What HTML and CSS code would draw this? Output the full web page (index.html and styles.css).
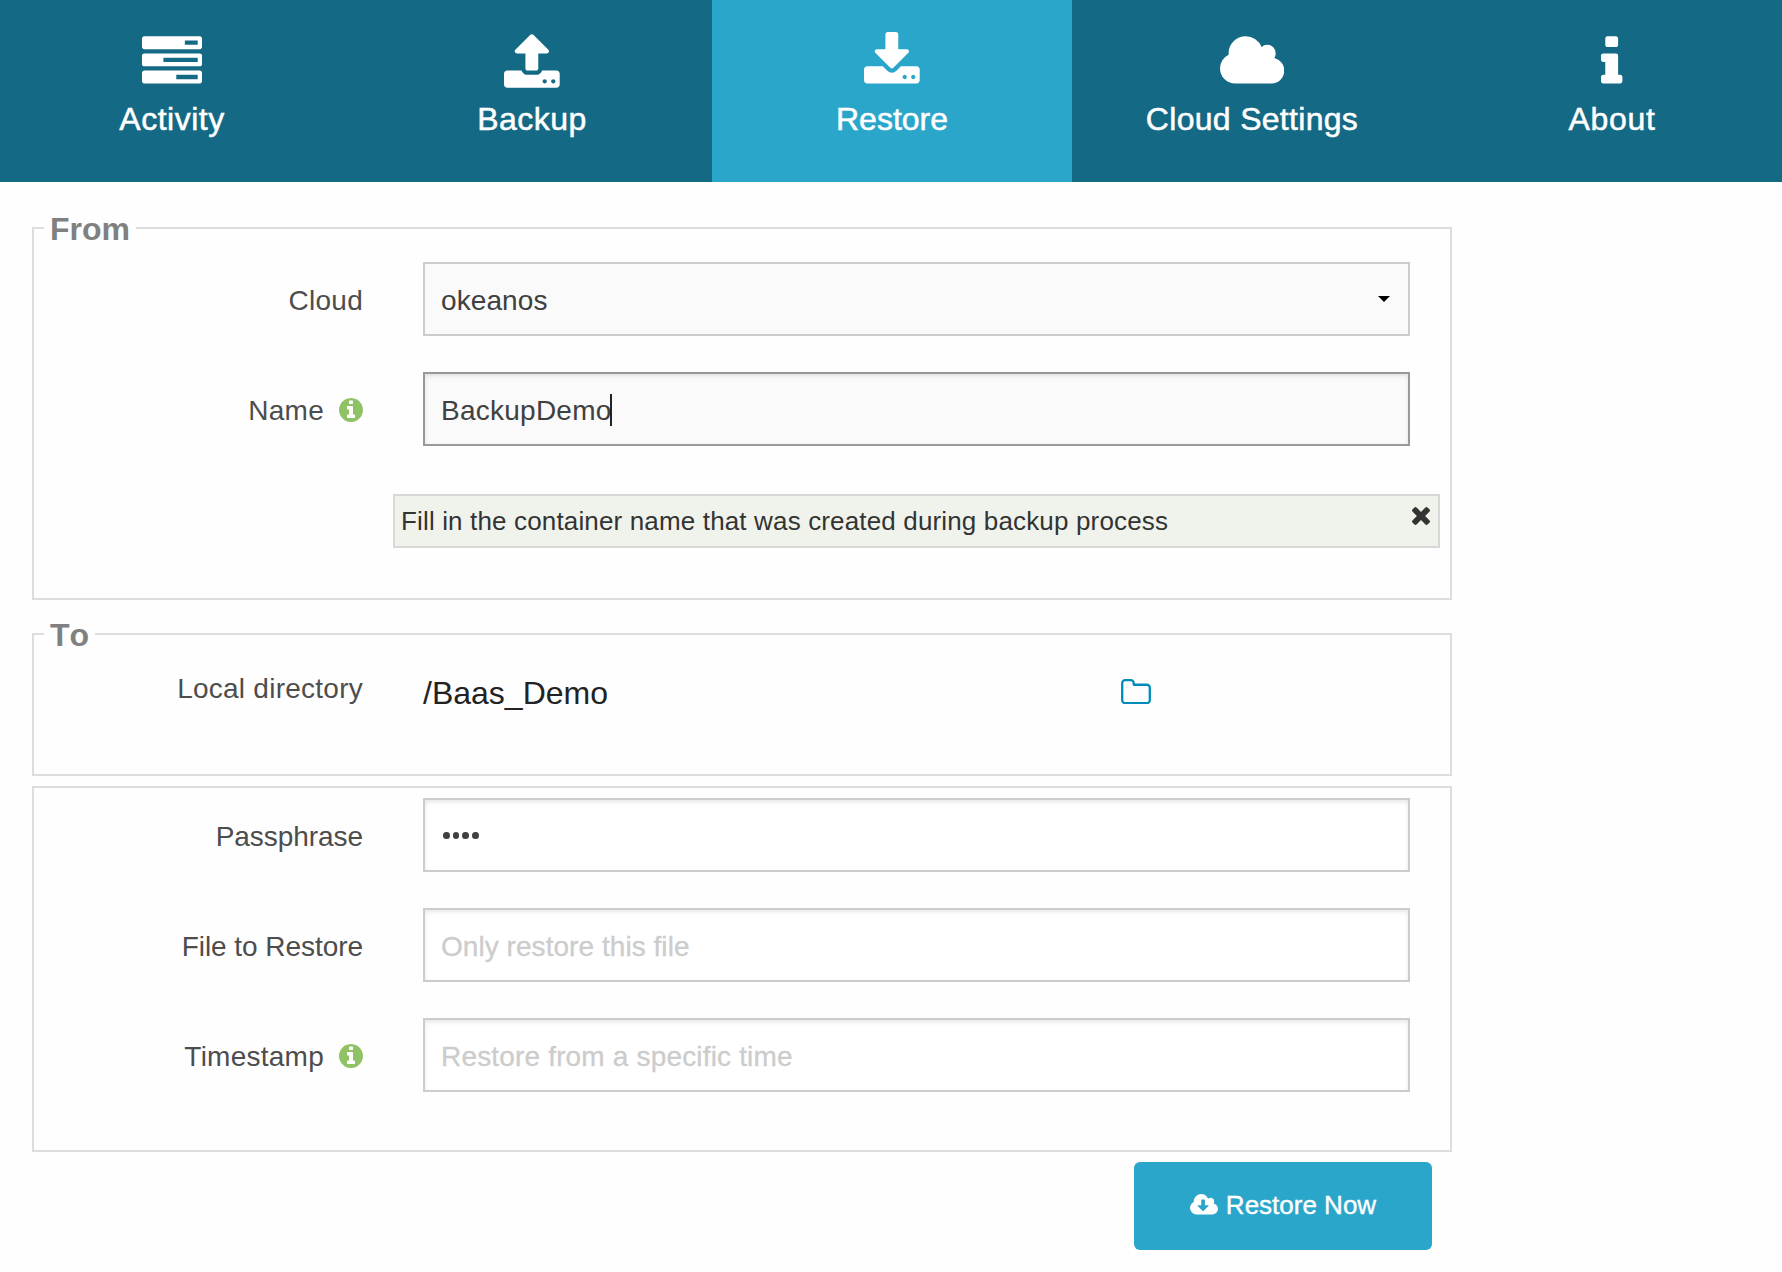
FILE: index.html
```html
<!DOCTYPE html>
<html lang="en">
<head>
<meta charset="utf-8">
<title>Restore</title>
<link rel="stylesheet" href="styles.css">
</head>
<body>
<svg class="defs" aria-hidden="true">
  <symbol id="info-circle" viewBox="0 128 1536 1536"><path d="M1024 1376v-160q0-14-9-23t-23-9h-96v-512q0-14-9-23t-23-9h-320q-14 0-23 9t-9 23v160q0 14 9 23t23 9h96v320h-96q-14 0-23 9t-9 23v160q0 14 9 23t23 9h448q14 0 23-9t9-23zm-128-896v-160q0-14-9-23t-23-9h-192q-14 0-23 9t-9 23v160q0 14 9 23t23 9h192q14 0 23-9t9-23zm640 416q0 209-103 385.5t-279.5 279.5-385.5 103-385.5-103-279.5-279.5-103-385.5 103-385.5 279.5-279.5 385.5-103 385.5 103 279.5 279.5 103 385.5z"/></symbol>
</svg>
<nav class="tabs">
  <a class="tab tab-activity">
    <svg class="tab-icon" width="60" height="60" viewBox="0 0 1792 1792"><path d="M1024 1408h640v-128h-640v128zm-384-512h1024v-128h-1024v128zm640-512h384v-128h-384v128zm512 832v256q0 26-19 45t-45 19h-1664q-26 0-45-19t-19-45v-256q0-26 19-45t45-19h1664q26 0 45 19t19 45zm0-512v256q0 26-19 45t-45 19h-1664q-26 0-45-19t-19-45v-256q0-26 19-45t45-19h1664q26 0 45 19t19 45zm0-512v256q0 26-19 45t-45 19h-1664q-26 0-45-19t-19-45v-256q0-26 19-45t45-19h1664q26 0 45 19t19 45z"/></svg>
    <span>Activity</span>
  </a>
  <a class="tab tab-backup">
    <svg class="tab-icon" width="55.7" height="60" viewBox="0 0 1664 1792"><path d="M1280 1472q0-26-19-45t-45-19-45 19-19 45 19 45 45 19 45-19 19-45zm256 0q0-26-19-45t-45-19-45 19-19 45 19 45 45 19 45-19 19-45zm128-224v320q0 40-28 68t-68 28h-1472q-40 0-68-28t-28-68v-320q0-40 28-68t68-28h427q21 56 70.5 92t110.5 36h256q61 0 110.5-36t70.5-92h427q40 0 68 28t28 68zm-325-648q-17 40-59 40h-256v448q0 26-19 45t-45 19h-256q-26 0-45-19t-19-45v-448h-256q-42 0-59-40-17-39 14-69l448-448q18-19 45-19t45 19l448 448q31 30 14 69z"/></svg>
    <span>Backup</span>
  </a>
  <a class="tab tab-restore active">
    <svg class="tab-icon" width="55.7" height="60" viewBox="0 0 1664 1792"><path d="M1280 1344q0-26-19-45t-45-19-45 19-19 45 19 45 45 19 45-19 19-45zm256 0q0-26-19-45t-45-19-45 19-19 45 19 45 45 19 45-19 19-45zm128-224v320q0 40-28 68t-68 28h-1472q-40 0-68-28t-28-68v-320q0-40 28-68t68-28h465l135 136q58 56 136 56t136-56l136-136h464q40 0 68 28t28 68zm-325-569q17 41-14 70l-448 448q-18 19-45 19t-45-19l-448-448q-31-29-14-70 17-39 59-39h256v-448q0-26 19-45t45-19h256q26 0 45 19t19 45v448h256q42 0 59 39z"/></svg>
    <span>Restore</span>
  </a>
  <a class="tab tab-cloud">
    <svg class="tab-icon" width="64.3" height="60" viewBox="0 0 1920 1792"><path d="M1920 1152q0 159-112.5 271.5t-271.5 112.5h-1088q-185 0-316.5-131.5t-131.5-316.5q0-132 71-241.5t187-163.5q-2-28-2-43 0-212 150-362t362-150q158 0 286.5 88t187.5 230q70-62 166-62 106 0 181 75t75 181q0 75-41 138 129 30 213 134.5t84 239.5z"/></svg>
    <span>Cloud Settings</span>
  </a>
  <a class="tab tab-about">
    <svg class="tab-icon" width="21.4" height="60" viewBox="0 0 640 1792"><path d="M640 1344v128q0 26-19 45t-45 19h-512q-26 0-45-19t-19-45v-128q0-26 19-45t45-19h64v-384h-64q-26 0-45-19t-19-45v-128q0-26 19-45t45-19h384q26 0 45 19t19 45v576h64q26 0 45 19t19 45zm-128-1152v192q0 26-19 45t-45 19h-256q-26 0-45-19t-19-45v-192q0-26 19-45t45-19h256q26 0 45 19t19 45z"/></svg>
    <span>About</span>
  </a>
</nav>
<form class="restore-form">
  <fieldset class="group group-from">
    <legend>From</legend>
    <div class="row">
      <label class="label">Cloud</label>
      <div class="field select"><span>okeanos</span><i class="arrow"></i></div>
    </div>
    <div class="row">
      <label class="label">Name <svg class="info" width="24" height="24"><use href="#info-circle"/></svg></label>
      <div class="field focused"><span class="entered">BackupDemo</span><i class="cursor"></i></div>
    </div>
    <div class="tip">
      <span>Fill in the container name that was created during backup process</span>
      <svg class="close" width="18" height="18" viewBox="110 366 1188 1188"><path d="M1298 1322q0 40-28 68l-136 136q-28 28-68 28t-68-28l-294-294-294 294q-28 28-68 28t-68-28l-136-136q-28-28-28-68t28-68l294-294-294-294q-28-28-28-68t28-68l136-136q28-28 68-28t68 28l294 294 294-294q28-28 68-28t68 28l136 136q28 28 28 68t-28 68l-294 294 294 294q28 28 28 68z"/></svg>
    </div>
  </fieldset>
  <fieldset class="group group-to">
    <legend>To</legend>
    <div class="row directory">
      <label class="label">Local directory</label>
      <div class="picker">
        <span>/Baas_Demo</span>
        <svg class="folder" width="30" height="25.3" viewBox="0 128 1664 1408"><path d="M1536 1312v-704q0-40-28-68t-68-28h-704q-40 0-68-28t-28-68v-64q0-40-28-68t-68-28h-320q-40 0-68 28t-28 68v960q0 40 28 68t68 28h1216q40 0 68-28t28-68zm128-704v704q0 92-66 158t-158 66h-1216q-92 0-158-66t-66-158v-960q0-92 66-158t158-66h320q92 0 158 66t66 158v32h672q92 0 158 66t66 158z"/></svg>
      </div>
    </div>
  </fieldset>
  <fieldset class="group group-options">
    <div class="row">
      <label class="label tight">Passphrase</label>
      <div class="field password"><i></i><i></i><i></i><i></i></div>
    </div>
    <div class="row">
      <label class="label tight">File to Restore</label>
      <div class="field"><span class="placeholder file">Only restore this file</span></div>
    </div>
    <div class="row">
      <label class="label">Timestamp <svg class="info" width="24" height="24"><use href="#info-circle"/></svg></label>
      <div class="field"><span class="placeholder">Restore from a specific time</span></div>
    </div>
  </fieldset>
  <button class="submit" type="button">
    <svg width="28" height="20.5" viewBox="0 128 1920 1408"><path d="M1280 928q0-14-9-23t-23-9h-224v-352q0-13-9.5-22.5t-22.5-9.5h-192q-13 0-22.5 9.5t-9.5 22.5v352h-224q-13 0-22.5 9.5t-9.5 22.5q0 14 9 23l352 352q9 9 23 9t23-9l351-351q10-12 10-24zm640 224q0 159-112.5 271.5t-271.5 112.5h-1088q-185 0-316.5-131.5t-131.5-316.5q0-132 71-241.5t187-163.5q-2-28-2-43 0-212 150-362t362-150q158 0 286.5 88t187.5 230q70-62 166-62 106 0 181 75t75 181q0 75-41 138 129 30 213 134.5t84 239.5z"/></svg>
    <span>Restore Now</span>
  </button>
</form>
</body>
</html>
```
FILE: styles.css
```css
* { box-sizing: border-box; }

body {
  margin: 0;
  background: #fefefe;
  color: #222;
  font-family: "Liberation Sans", Arial, sans-serif;
  overflow: hidden;
}

svg { fill: currentColor; display: block; flex: none; }
.defs { display: none; }

/* Top navigation */
.tabs {
  display: grid;
  grid-template-columns: repeat(5, 360px);
  height: 182px;
  margin-left: -8px;
  background: #146a85;
}
.tab {
  display: flex;
  flex-direction: column;
  align-items: center;
  gap: 8.4px;
  padding-top: 32.6px;
  color: #fff;
  font-size: 32px;
  line-height: 36px;
  letter-spacing: 0.3px;
  -webkit-text-stroke: 0.5px;
}
.tab-icon { margin-top: -0.4px; margin-bottom: 0.4px; -webkit-text-stroke: 0; }
.tab.active { background: #2ba6cb; }
.tab-activity, .tab-backup { letter-spacing: 0.5px; }
.tab-restore { letter-spacing: 0; }
.tab-about { letter-spacing: 0.7px; }

/* Form groups */
.restore-form {
  display: flex;
  flex-direction: column;
  width: 1420px;
  margin: 27px 0 0 32px;
}
.group {
  margin: 0;
  padding: 0;
  border: 2px solid #ddd;
}
.group-from { padding-bottom: 50px; }
.group-from legend + .row { margin-top: 15px; }
.group-to { height: 161px; margin-top: 15px; }
.group-options { margin-top: 10px; padding: 10px 0 58px; }

legend {
  margin-left: 10px;
  padding: 2px 6px 0;
  color: #808080;
  font-size: 32px;
  font-weight: bold;
  font-kerning: none;
  line-height: 36px;
}

.row {
  display: grid;
  grid-template-columns: 329px 987px;
  column-gap: 60px;
  align-items: center;
}
.row + .row { margin-top: 36px; }

.label {
  display: flex;
  justify-content: flex-end;
  align-items: center;
  gap: 15px;
  padding-top: 4px;
  color: #4d4d4d;
  font-size: 28px;
  line-height: 32px;
  letter-spacing: 0.25px;
}
.label.tight { letter-spacing: -0.05px; }
.info { margin-top: -2px; color: #8fc165; }

.field {
  display: flex;
  align-items: center;
  height: 74px;
  padding: 3px 16px 0;
  border: 2px solid #ccc;
  background: #fff;
  box-shadow: inset 0 2px 4px rgba(0, 0, 0, 0.1);
  color: #404040;
  font-size: 28px;
  line-height: 32px;
  letter-spacing: 0.1px;
}
.select {
  justify-content: space-between;
  padding-right: 18px;
  background: #fafafa;
  box-shadow: none;
}
.arrow {
  margin-top: -3px;
  border: 6px solid transparent;
  border-top-color: #000;
  border-bottom-width: 0;
}
.focused { background: #fafafa; border-color: #999; }
.entered { letter-spacing: 0.25px; }
.cursor { width: 2px; height: 32px; margin: -2px 0 0 -2px; background: #222; }
.placeholder { color: #ccc; letter-spacing: 0.17px; -webkit-text-stroke: 0.3px; }
.placeholder.file { letter-spacing: 0.05px; }
.password { gap: 3.2px; padding: 0 18px; }
.password i { width: 6.5px; height: 7px; border-radius: 50%; background: #404040; }

.tip {
  display: flex;
  justify-content: space-between;
  width: 1047px;
  height: 54px;
  margin: 48px 0 0 359px;
  padding: 9px 8px 0 6px;
  border: 2px solid #d8d8d8;
  background: #f0f3eb;
  color: #333;
  font-size: 26px;
  line-height: 32px;
  letter-spacing: 0.15px;
}
.close { margin-top: 2px; }

.directory { margin-top: 16px; align-items: start; }
.picker {
  display: grid;
  grid-template-columns: 698px auto;
  justify-content: start;
  padding-top: 6px;
  font-size: 32px;
  line-height: 36px;
}
.folder { margin-top: 4px; color: #008cba; }

.submit {
  display: flex;
  align-items: center;
  justify-content: center;
  gap: 8px;
  align-self: flex-end;
  width: 298px;
  height: 88px;
  margin: 10px 20px 0 0;
  padding: 0 0 2px;
  border: 0;
  border-radius: 6px;
  background: #2ba6cb;
  color: #fff;
  font: 26px/30px "Liberation Sans", Arial, sans-serif;
  letter-spacing: 0;
}
.submit svg { margin-top: -1px; }
.submit span { -webkit-text-stroke: 0.4px; }
```
